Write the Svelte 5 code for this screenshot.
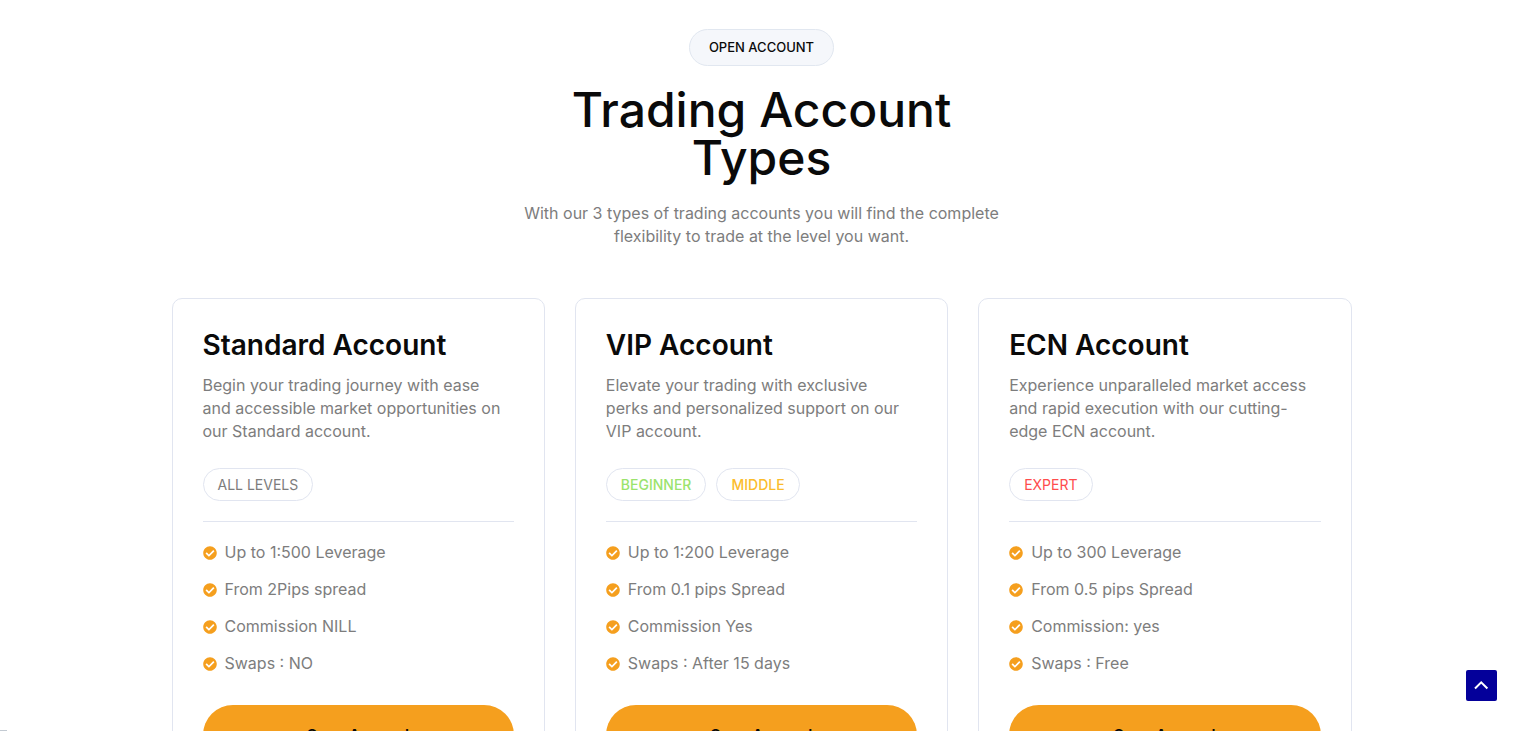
<script lang="ts">
	type Tag = { label: string; tone: string };
	type Account = { title: string; text: string; tags: Tag[]; features: string[] };

	const accounts: Account[] = [
		{
			title: 'Standard Account',
			text: 'Begin your trading journey with ease and accessible market opportunities on our Standard account.',
			tags: [{ label: 'All levels', tone: 'plain' }],
			features: ['Up to 1:500 Leverage', 'From 2Pips spread', 'Commission NILL', 'Swaps : NO']
		},
		{
			title: 'VIP Account',
			text: 'Elevate your trading with exclusive perks and personalized support on our VIP account.',
			tags: [
				{ label: 'Beginner', tone: 'green' },
				{ label: 'Middle', tone: 'yellow' }
			],
			features: ['Up to 1:200 Leverage', 'From 0.1 pips Spread', 'Commission Yes', 'Swaps : After 15 days']
		},
		{
			title: 'ECN Account',
			text: 'Experience unparalleled market access and rapid execution with our cutting-edge ECN account.',
			tags: [{ label: 'Expert', tone: 'red' }],
			features: ['Up to 300 Leverage', 'From 0.5 pips Spread', 'Commission: yes', 'Swaps : Free']
		}
	];

	function toTop() {
		window.scrollTo({ top: 0, behavior: 'smooth' });
	}
</script>

<section class="accounts">
	<header class="intro">
		<span class="badge">Open account</span>
		<h2>Trading Account Types</h2>
		<p>With our 3 types of trading accounts you will find the complete flexibility to trade at the level you want.</p>
	</header>

	<div class="cards">
		{#each accounts as account}
			<article class="card">
				<h3>{account.title}</h3>
				<p>{account.text}</p>
				<div class="tags">
					{#each account.tags as tag}
						<span class="tag {tag.tone}">{tag.label}</span>
					{/each}
				</div>
				<ul>
					{#each account.features as feature}
						<li>
							<svg width="14" height="14" viewBox="0 0 512 512" aria-hidden="true">
								<path
									fill="currentColor"
									d="M504 256c0 136.967-111.033 248-248 248S8 392.967 8 256 119.033 8 256 8s248 111.033 248 248zM227.314 387.314l184-184c6.248-6.248 6.248-16.379 0-22.627l-22.627-22.627c-6.248-6.249-16.379-6.249-22.628 0L216 308.118l-70.059-70.059c-6.248-6.248-16.379-6.248-22.628 0l-22.627 22.627c-6.248 6.248-6.248 16.379 0 22.627l104 104c6.249 6.249 16.379 6.249 22.628.001z"
								/>
							</svg>
							<span>{feature}</span>
						</li>
					{/each}
				</ul>
				<a class="open" href="#open">Open Account</a>
			</article>
		{/each}
	</div>
</section>

<button class="to-top" aria-label="Back to top" onclick={toTop}>
	<svg width="15" height="15" viewBox="0 0 15 15" fill="none" aria-hidden="true">
		<path d="M1 10.5l6.2-6.2 6.2 6.2" stroke="currentColor" stroke-width="2" />
	</svg>
</button>

<div class="edge-mark"></div>

<style>
	:global(body) {
		background: #fff;
	}

	.accounts {
		box-sizing: border-box;
		max-width: 1220px;
		margin: 0 auto;
		padding: 29px 21px 60px 19px;
		font-family: Inter, 'Liberation Sans', sans-serif;
		font-size: 16px;
		line-height: 23px;
		color: #7d7d7d;
	}

	.intro {
		display: flex;
		flex-direction: column;
		align-items: center;
		max-width: 500px;
		margin: 0 auto 50px;
		text-align: center;
	}

	.badge {
		padding: 7px 19px;
		border: 1px solid #e1e7f0;
		border-radius: 20px;
		background: #f5f7fb;
		color: #0a0a0a;
		font-size: 13px;
		font-weight: 500;
		line-height: 21px;
		text-transform: uppercase;
	}

	h2 {
		margin: 20px 0;
		color: #0a0a0a;
		font-size: 48px;
		font-weight: 500;
		line-height: 48px;
	}

	p {
		margin: 0;
	}

	.cards {
		display: grid;
		grid-template-columns: repeat(auto-fit, minmax(300px, 1fr));
		gap: 30px;
	}

	.card {
		padding: 30px;
		border: 1px solid #e1e5f0;
		border-radius: 10px;
	}

	.card p {
		padding-right: 6px;
	}

	h3 {
		margin: 0 0 13px;
		color: #0a0a0a;
		font-size: 28px;
		font-weight: 600;
		line-height: 32px;
	}

	.tags {
		display: flex;
		gap: 10px;
		padding: 25px 0 20px;
		border-bottom: 1px solid #e1e5f0;
	}

	.tag {
		padding: 5px 14px;
		border: 1px solid #e1e5f0;
		border-radius: 17px;
		font-size: 14px;
		line-height: 21px;
		text-transform: uppercase;
	}

	.green {
		color: #9be36d;
		font-weight: 500;
	}

	.yellow {
		color: #fbbc2c;
		font-weight: 500;
	}

	.red {
		color: #ff4d4d;
	}

	ul {
		display: flex;
		flex-direction: column;
		gap: 14px;
		margin: 19px 0 30px;
		padding: 0;
		list-style: none;
	}

	li {
		display: flex;
		align-items: center;
		gap: 8px;
	}

	li svg {
		flex-shrink: 0;
		color: #f59f1e;
	}

	.open {
		display: block;
		padding: 20px 30px;
		border-radius: 30px;
		background: #f59f1e;
		color: #0a0a0a;
		font-size: 15px;
		font-weight: 600;
		line-height: 20px;
		text-align: center;
		text-decoration: none;
	}

	.to-top {
		position: fixed;
		right: 28px;
		bottom: 30px;
		display: flex;
		align-items: center;
		justify-content: center;
		width: 31px;
		height: 31px;
		padding: 0;
		border: 0;
		border-radius: 2px;
		background: #04009a;
		color: #fff;
		cursor: pointer;
	}

	.edge-mark {
		position: fixed;
		left: 0;
		bottom: 0;
		width: 7px;
		height: 1px;
		background: #c3cad2;
	}
</style>
